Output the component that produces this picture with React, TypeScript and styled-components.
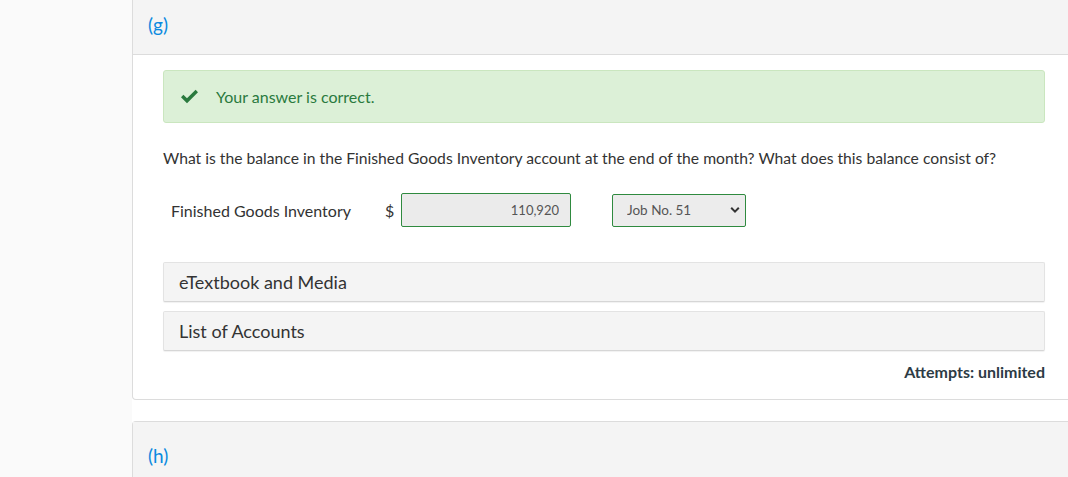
import styled, { createGlobalStyle } from "styled-components";

const GlobalStyle = createGlobalStyle`
  html, body {
    margin: 0;
    padding: 0;
    background: #fafafa;
    font-family: Lato, "Open Sans", Arial, sans-serif;
    color: #333;
  }
  * { box-sizing: border-box; }
`;

const Page = styled.div`
  display: flex;
  width: 1068px;
  height: 477px;
  overflow: hidden;
`;

const Sidebar = styled.div`
  width: 132px;
  flex-shrink: 0;
  background: #fafafa;
`;

const Main = styled.div`
  flex: 1;
  background: #fff;
  display: flex;
  flex-direction: column;
  gap: 21px;
`;

const Card = styled.section`
  width: 945px;
  flex-shrink: 0;
  background: #fff;
  border: 1px solid #dcdcdc;
  border-top: none;
  border-radius: 0 0 4px 4px;
`;

const NextCard = styled(Card)`
  border-top: 1px solid #dcdcdc;
  border-bottom: none;
  border-radius: 4px 4px 0 0;
  background: #f4f4f4;
  height: 60px;
`;

const CardHeader = styled.div<{ $height: number; $pad: number; $line?: boolean }>`
  height: ${(p) => p.$height}px;
  padding-top: ${(p) => p.$pad}px;
  padding-left: 15px;
  background: #f4f4f4;
  border-bottom: ${(p) => (p.$line ? "1px solid #dcdcdc" : "none")};
`;

const PartLabel = styled.span`
  color: #0a8ae0;
  font-size: 19px;
  line-height: 20px;
`;

const CardBody = styled.div`
  padding: 15px 31px 17px 30px;
  display: flex;
  flex-direction: column;
`;

const Success = styled.div`
  height: 53px;
  display: flex;
  align-items: center;
  gap: 17px;
  padding-left: 16px;
  background: #dcf0d7;
  border: 1px solid #cae6bf;
  border-radius: 3px;
  color: #2a7a3e;
  font-size: 16px;
`;

const Question = styled.p`
  margin: 25px 0 0;
  font-size: 15.7px;
  line-height: 20px;
  color: #333;
`;

const AnswerRow = styled.div`
  display: flex;
  align-items: center;
  margin-top: 25px;
  padding-left: 8px;
  height: 34px;
`;

const FieldLabel = styled.span`
  font-size: 16px;
  width: 214px;
`;

const Dollar = styled.span`
  font-size: 16px;
  width: 16px;
`;

const AmountInput = styled.input`
  width: 170px;
  height: 34px;
  border: 1px solid #2f8a3f;
  border-radius: 2px;
  background: #ebebeb;
  text-align: right;
  padding: 0 11px;
  font-family: Lato, Arial, sans-serif;
  font-size: 13px;
  color: #555;
  outline: none;
`;

const SelectWrap = styled.div`
  position: relative;
  margin-left: 41px;
  width: 134px;
  height: 33px;
`;

const Select = styled.select`
  appearance: none;
  width: 100%;
  height: 100%;
  border: 1px solid #2f8a3f;
  border-radius: 2px;
  background: #ececec;
  padding: 0 14px;
  font-family: Lato, Arial, sans-serif;
  font-size: 13.5px;
  color: #555;
  outline: none;
`;

const Chevron = styled.svg`
  position: absolute;
  right: 6px;
  top: 12px;
  pointer-events: none;
`;

const Accordions = styled.div`
  margin-top: 35px;
  display: flex;
  flex-direction: column;
  gap: 9px;
`;

const AccordionItem = styled.div`
  height: 40px;
  display: flex;
  align-items: center;
  padding-left: 15px;
  background: #f4f4f4;
  border: 1px solid #e3e3e3;
  border-bottom-color: #d6d6d6;
  border-radius: 2px;
  box-shadow: 0 1px 1px rgba(0, 0, 0, 0.06);
  font-size: 18px;
  color: #333;
`;

const Attempts = styled.div`
  margin-top: 11px;
  align-self: flex-end;
  font-size: 16px;
  font-weight: 700;
  color: #2d3b45;
  line-height: 20px;
`;

function CheckIcon() {
  return (
    <svg width="19" height="15" viewBox="0 0 19 15" aria-hidden="true">
      <path
        d="M1 8.2 L3.4 5.8 L7 9.3 L15.6 0.8 L18 3.2 L7 14.2 Z"
        fill="#2a7a3e"
      />
    </svg>
  );
}

export default function App() {
  return (
    <>
      <GlobalStyle />
      <Page>
        <Sidebar />
        <Main>
          <Card>
            <CardHeader $height={55} $pad={15} $line>
              <PartLabel>(g)</PartLabel>
            </CardHeader>
            <CardBody>
              <Success>
                <CheckIcon />
                <span>Your answer is correct.</span>
              </Success>
              <Question>
                What is the balance in the Finished Goods Inventory account at
                the end of the month? What does this balance consist of?
              </Question>
              <AnswerRow>
                <FieldLabel>Finished Goods Inventory</FieldLabel>
                <Dollar>$</Dollar>
                <AmountInput readOnly value="110,920" />
                <SelectWrap>
                  <Select defaultValue="51">
                    <option value="51">Job No. 51</option>
                  </Select>
                  <Chevron width="10" height="8" viewBox="0 0 10 8">
                    <path
                      d="M1.2 1.8 L5 5.6 L8.8 1.8"
                      stroke="#333"
                      strokeWidth="2"
                      fill="none"
                    />
                  </Chevron>
                </SelectWrap>
              </AnswerRow>
              <Accordions>
                <AccordionItem>eTextbook and Media</AccordionItem>
                <AccordionItem>List of Accounts</AccordionItem>
              </Accordions>
              <Attempts>Attempts: unlimited</Attempts>
            </CardBody>
          </Card>
          <NextCard>
            <CardHeader $height={60} $pad={24}>
              <PartLabel>(h)</PartLabel>
            </CardHeader>
          </NextCard>
        </Main>
      </Page>
    </>
  );
}
